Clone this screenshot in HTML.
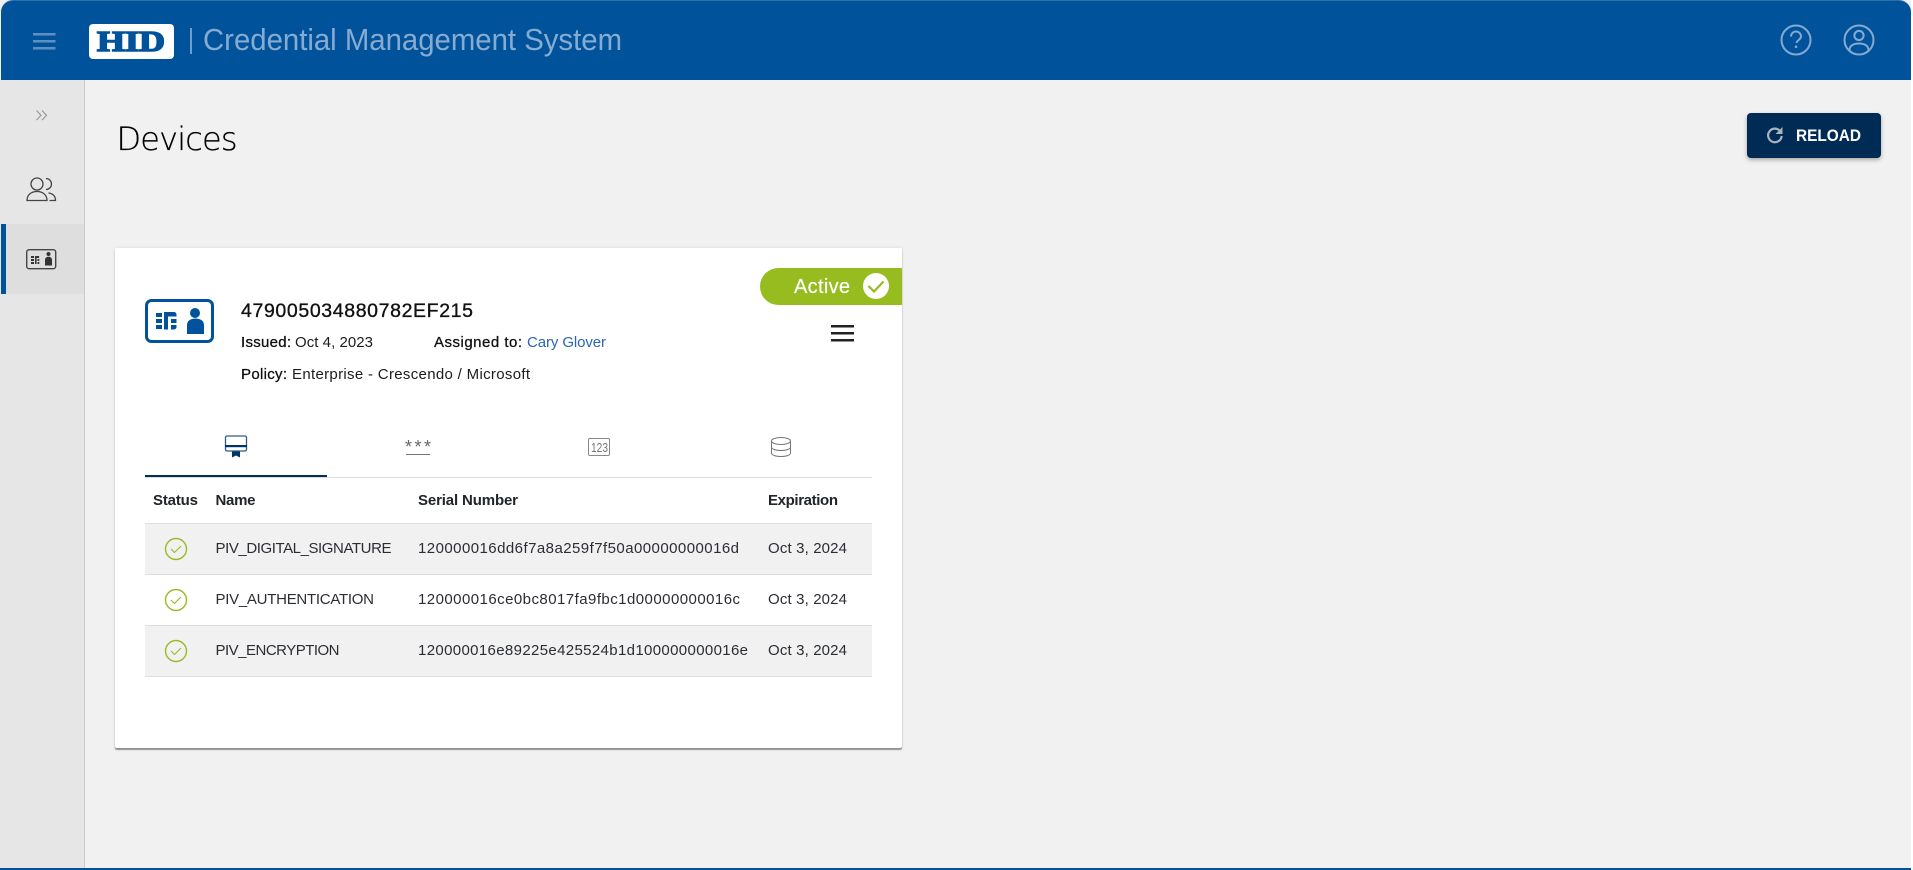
<!DOCTYPE html>
<html lang="en">
<head>
<meta charset="utf-8">
<title>Devices</title>
<style>
html,body{margin:0;padding:0;width:1913px;height:870px;overflow:hidden;background:#fff;font-family:"Liberation Sans",sans-serif}
#bg{position:absolute;left:0;top:0;width:1911px;height:870px;background:#f1f1f1}
#hdr{position:absolute;left:1px;top:0;width:1910px;height:80px;background:#00539b;border-radius:12px 12px 0 0;border-top:1px solid #2f6ea8;box-sizing:border-box}
#corner{position:absolute;left:0;top:0;width:12px;height:80px;background:#fff;z-index:-1}
#side{position:absolute;left:0;top:80px;width:84px;height:788px;background:#e6e6e6;border-right:1px solid #ccc}
#act{position:absolute;left:1px;top:224px;width:83px;height:70px;background:#dedede}
#bar{position:absolute;left:1px;top:224px;width:5px;height:70px;background:#00539b}
#foot{position:absolute;left:0;top:868px;width:1911px;height:2px;background:#00539b}
#card{position:absolute;left:115px;top:248px;width:787px;height:500px;background:#fff;border-radius:2px;box-shadow:0 2px 1px rgba(0,0,0,.38),0 0 3px rgba(0,0,0,.1)}
#btn{position:absolute;left:1747px;top:113px;width:134px;height:45px;background:#002b55;border-radius:4px;box-shadow:0 2px 4px rgba(0,0,0,.3)}
svg{position:absolute;left:0;top:0}
text{font-family:"Liberation Sans",sans-serif}
.h{font-size:15px;font-weight:bold;fill:#212529}
.c{font-size:15px;fill:#2a2d33}
.m{font-size:15px;fill:#1c1c1c}
.mb{font-size:15px;fill:#111;stroke:#111;stroke-width:.3px}
</style>
</head>
<body>
<div id="bg"></div>
<div id="hdr"></div>
<div id="side"></div>
<div id="act"></div>
<div id="bar"></div>
<div id="foot"></div>
<div id="card"></div>
<div id="btn"></div>
<svg width="1913" height="870" viewBox="0 0 1913 870" xmlns="http://www.w3.org/2000/svg">
  <!-- header -->
  <g fill="#5f8fc0">
    <rect x="33" y="33" width="22.500" height="2.500"/>
    <rect x="33" y="40" width="22.500" height="2.500"/>
    <rect x="33" y="47" width="22.500" height="2.500"/>
  </g>
  <rect x="89" y="24" width="85" height="35" rx="4" fill="#fff"/>
  <text x="97" y="51" font-size="29" textLength="68" lengthAdjust="spacingAndGlyphs" style="font-family:'Liberation Serif',serif;font-weight:bold" fill="#00539b" stroke="#00539b" stroke-width="1.500">HID</text>
  <rect x="190" y="28" width="2" height="26" fill="#6f9ecb"/>
  <text x="203" y="50" font-size="31" textLength="419" lengthAdjust="spacingAndGlyphs" fill="#86abd2">Credential Management System</text>
  <g fill="none" stroke="#86a9cf" stroke-width="2">
    <circle cx="1796" cy="40" r="14.500"/>
    <path d="M1791 36.500a5 5 0 0 1 10 0c0 3-3.600 3.200-4.600 6.400"/>
    <circle cx="1859" cy="40" r="14.500"/>
    <circle cx="1859" cy="35.500" r="4.600"/>
    <path d="M1849.500 50.500c0-5 4-7 9.500-7s9.500 2 9.500 7"/>
  </g>
  <circle cx="1796" cy="46.800" r="1.300" fill="#86a9cf"/>

  <!-- sidebar -->
  <path d="M36.500 110.500l4.500 4.800-4.500 4.800M42 110.500l4.500 4.800-4.500 4.800" fill="none" stroke="#9a9a9a" stroke-width="1.200"/>
  <g fill="none" stroke="#444" stroke-width="1.300">
    <circle cx="37" cy="184" r="6"/>
    <path d="M46 178.500a5.500 5.500 0 0 1 0 11"/>
    <path d="M27 200.500c0-5.500 4-9 10-9s10 3.500 10 9z"/>
    <path d="M48.500 193c4.200.5 7 3 7 7.500h-6"/>
    <rect x="26.700" y="249.700" width="29" height="19" rx="2.500" stroke-width="1.400"/>
  </g>
  <g fill="#333">
    <rect x="31" y="256" width="3" height="2"/><rect x="31" y="259" width="3" height="2"/><rect x="31" y="262" width="3" height="2"/>
    <rect x="35" y="256" width="1.600" height="8"/><rect x="36.600" y="256" width="2.500" height="2"/><rect x="37.500" y="259" width="1.800" height="2"/><rect x="37.500" y="262" width="1.800" height="2"/>
    <circle cx="48.500" cy="254" r="2"/>
    <path d="M45 265.500v-5.500c0-2 1.500-3.200 3.500-3.200s3.500 1.200 3.500 3.200v5.500z"/>
  </g>

  <!-- page title & reload -->
  <text x="116.500" y="150" font-size="32" textLength="121" style="font-family:'DejaVu Sans ExtraLight','DejaVu Sans',sans-serif;font-weight:200" fill="#000" stroke="#000" stroke-width=".25">Devices</text>
  <path d="M1780.500 131.500a6.800 6.800 0 1 0 1.200 4.500" fill="none" stroke="#a9b4c0" stroke-width="2.200"/>
  <path d="M1782.500 127v7h-7z" fill="#a9b4c0"/>
  <text x="1796" y="141" font-size="16.500" font-weight="bold" textLength="65" lengthAdjust="spacingAndGlyphs" fill="#fff">RELOAD</text>

  <!-- active badge -->
  <path d="M778.500 268H902v37H778.500a18.500 18.500 0 0 1 0-37z" fill="#97bc1f"/>
  <text x="794" y="293" font-size="20" textLength="56" fill="#fff" stroke="#fff" stroke-width=".2">Active</text>
  <circle cx="876" cy="286" r="13" fill="#fff"/>
  <path d="M868.500 286l5.500 5.500 9.500-10" fill="none" stroke="#97bc1f" stroke-width="2.200"/>
  <g fill="#222">
    <rect x="831" y="325" width="23" height="2.500"/>
    <rect x="831" y="332" width="23" height="2.500"/>
    <rect x="831" y="339" width="23" height="2.500"/>
  </g>

  <!-- device card head -->
  <rect x="146.500" y="300.500" width="66" height="41" rx="5" fill="none" stroke="#00539b" stroke-width="3"/>
  <g fill="#00539b">
    <rect x="156" y="313" width="6" height="4"/><rect x="156" y="319" width="6" height="4"/><rect x="156" y="325" width="6" height="4"/>
    <rect x="164" y="312" width="4" height="17.500"/>
    <path d="M168 312h6a2.500 2.500 0 0 1 2.500 2.500v2h-8.500zM171 319h5.500v4H171zM171 325h5.500v2a2.500 2.500 0 0 1-2.500 2.500h-3z"/>
    <circle cx="195" cy="313" r="5"/>
    <path d="M187 334v-9c0-4 3.500-6.500 8.500-6.500s8.500 2.500 8.500 6.500v9z"/>
  </g>
  <text x="241" y="317" font-size="19.500" textLength="232" fill="#111" stroke="#111" stroke-width=".35">479005034880782EF215</text>
  <text x="241" y="347" class="mb" textLength="50">Issued:</text>
  <text x="295" y="347" class="m" textLength="78">Oct 4, 2023</text>
  <text x="434" y="347" class="mb" textLength="88">Assigned to:</text>
  <text x="527" y="347" class="m" textLength="79" style="fill:#2b64b5">Cary Glover</text>
  <text x="241" y="379" class="mb" textLength="46">Policy:</text>
  <text x="292" y="379" class="m" textLength="238">Enterprise - Crescendo / Microsoft</text>

  <!-- tabs -->
  <rect x="145" y="477" width="727" height="1" fill="#dcdcdc"/>
  <rect x="145" y="475" width="182" height="2" fill="#002f5f"/>
  <g>
    <rect x="225.500" y="436" width="21" height="15" rx="1.500" fill="none" stroke="#2f5c88" stroke-width="1.300"/>
    <rect x="225" y="445" width="22" height="2.200" fill="#003366"/>
    <path d="M232 451.500h8v6l-4-2-4 2z" fill="#003366"/>
    <text x="405" y="453" font-size="18" textLength="26" fill="#666">***</text>
    <rect x="406" y="454" width="24" height="1" fill="#777"/>
    <rect x="588.500" y="438.500" width="21" height="17" rx="1.500" fill="none" stroke="#888" stroke-width="1"/>
    <text x="591" y="452" font-size="12.500" textLength="17" lengthAdjust="spacingAndGlyphs" fill="#777">123</text>
    <g fill="none" stroke="#777" stroke-width="1">
      <ellipse cx="781" cy="441" rx="9.500" ry="3.500"/>
      <path d="M771.500 441v12c0 2 4 3.500 9.500 3.500s9.500-1.500 9.500-3.500v-12M771.500 447c0 2 4 3.500 9.500 3.500s9.500-1.500 9.500-3.500"/>
    </g>
  </g>

  <!-- table -->
  <text x="153" y="505" class="h" textLength="45">Status</text>
  <text x="215.500" y="505" class="h" textLength="40">Name</text>
  <text x="418" y="505" class="h" textLength="100">Serial Number</text>
  <text x="768" y="505" class="h" textLength="70">Expiration</text>

  <rect x="145" y="523" width="727" height="51" fill="#f1f1f1"/>
  <rect x="145" y="625" width="727" height="51" fill="#f1f1f1"/>
  <g fill="#dfdfdf">
    <rect x="145" y="523" width="727" height="1"/>
    <rect x="145" y="574" width="727" height="1"/>
    <rect x="145" y="625" width="727" height="1"/>
    <rect x="145" y="676" width="727" height="1"/>
  </g>
  <g fill="none" stroke="#97bc1f">
    <circle cx="176" cy="549" r="10.500" stroke-width="1.400"/>
    <path d="M171 549l3.500 3.500 6.500-6.500" stroke-width="1.100"/>
    <circle cx="176" cy="600" r="10.500" stroke-width="1.400"/>
    <path d="M171 600l3.500 3.500 6.500-6.500" stroke-width="1.100"/>
    <circle cx="176" cy="651" r="10.500" stroke-width="1.400"/>
    <path d="M171 651l3.500 3.500 6.500-6.500" stroke-width="1.100"/>
  </g>
  <text x="215.500" y="553" class="c" textLength="176">PIV_DIGITAL_SIGNATURE</text>
  <text x="418" y="553" class="c" textLength="321">120000016dd6f7a8a259f7f50a00000000016d</text>
  <text x="768" y="553" class="c" textLength="79">Oct 3, 2024</text>
  <text x="215.500" y="604" class="c" textLength="158.500">PIV_AUTHENTICATION</text>
  <text x="418" y="604" class="c" textLength="322">120000016ce0bc8017fa9fbc1d00000000016c</text>
  <text x="768" y="604" class="c" textLength="79">Oct 3, 2024</text>
  <text x="215.500" y="655" class="c" textLength="124">PIV_ENCRYPTION</text>
  <text x="418" y="655" class="c" textLength="330">120000016e89225e425524b1d100000000016e</text>
  <text x="768" y="655" class="c" textLength="79">Oct 3, 2024</text>
</svg>
</body>
</html>
